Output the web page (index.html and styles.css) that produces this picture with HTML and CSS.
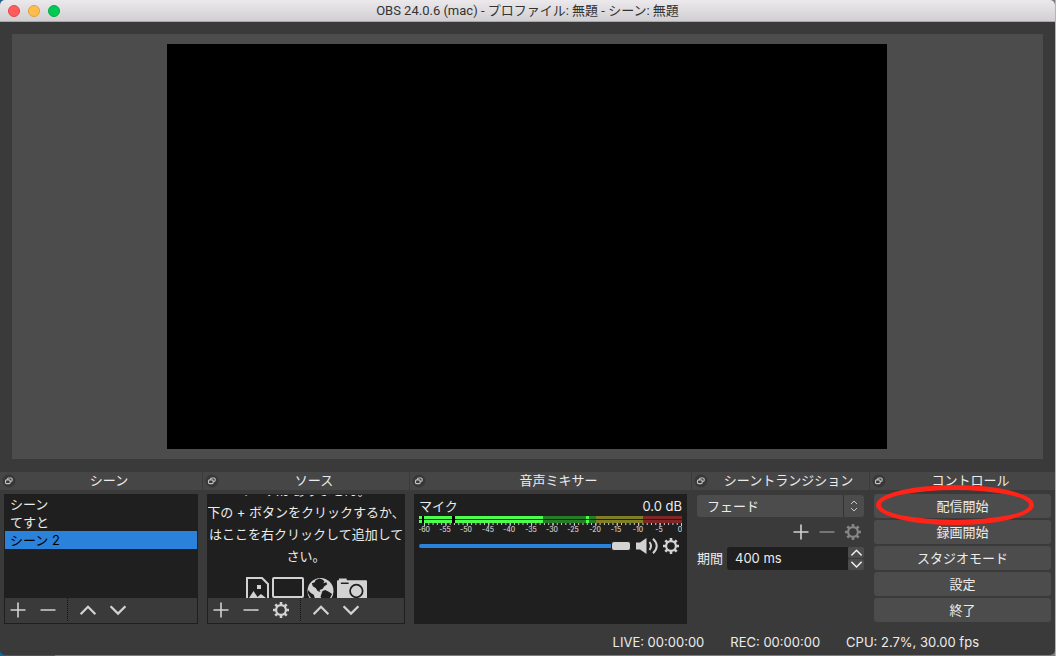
FILE: index.html
```
<!DOCTYPE html>
<html lang="ja">
<head>
<meta charset="UTF-8">
<meta name="viewport" content="width=device-width, initial-scale=1.0">
<title>OBS 24.0.6 (mac) - プロファイル: 無題 - シーン: 無題</title>
<link rel="stylesheet" href="styles.css">
</head>
<body>
  <svg class="defs" aria-hidden="true">
    <symbol id="i-float" viewBox="0 0 12 12">
      <circle cx="6" cy="6" r="5.5" fill="#383838"/>
      <g fill="none" stroke="#c4c4c4"><rect x="4.7" y="3.4" width="4" height="3" rx="1"/><rect x="3" y="5" width="4" height="3.2" rx="1" fill="#383838"/></g>
    </symbol>
    <symbol id="i-plus" viewBox="0 0 16 16"><path d="M8 0.5v15M0.5 8h15" stroke="currentColor" stroke-width="1.6" fill="none"/></symbol>
    <symbol id="i-minus" viewBox="0 0 16 16"><path d="M0.5 8h15" stroke="currentColor" stroke-width="1.6" fill="none"/></symbol>
    <symbol id="i-up" viewBox="0 0 16 16"><path d="M0.6 12.2L8 4.8l7.4 7.4" stroke="currentColor" stroke-width="2.2" fill="none"/></symbol>
    <symbol id="i-down" viewBox="0 0 16 16"><path d="M0.6 4.2L8 11.6l7.4-7.4" stroke="currentColor" stroke-width="2.2" fill="none"/></symbol>
    <symbol id="i-gear" viewBox="0 0 16 16">
      <circle cx="8" cy="8" r="4.9" fill="none" stroke="currentColor" stroke-width="2.2"/>
      <path d="M8 0v3M8 13v3M0 8h3M13 8h3M2.3 2.3l2.2 2.2M11.5 11.5l2.2 2.2M2.3 13.7l2.2-2.2M11.5 4.5l2.2-2.2" stroke="currentColor" stroke-width="2.6"/>
    </symbol>
  </svg>

  <div class="window">
    <header class="titlebar">
      <div class="lights">
        <button class="light close" aria-label="閉じる"></button>
        <button class="light minimize" aria-label="しまう"></button>
        <button class="light zoom" aria-label="拡大"></button>
      </div>
      <h1>OBS 24.0.6 (mac) - プロファイル: 無題 - シーン: 無題</h1>
    </header>

    <main class="preview">
      <div class="canvas"></div>
    </main>

    <div class="docks">
      <section class="dock">
        <header class="dock-title"><svg><use href="#i-float"/></svg><h2>シーン</h2></header>
        <div class="dock-body">
          <div class="panel">
            <ul class="scene-list">
              <li>シーン</li>
              <li>てすと</li>
              <li class="selected">シーン 2</li>
            </ul>
            <div class="toolbar">
              <button aria-label="追加"><svg><use href="#i-plus"/></svg></button>
              <button aria-label="削除"><svg><use href="#i-minus"/></svg></button>
              <span class="divider"></span>
              <button aria-label="上へ"><svg><use href="#i-up"/></svg></button>
              <button aria-label="下へ"><svg><use href="#i-down"/></svg></button>
            </div>
          </div>
        </div>
      </section>

      <section class="dock">
        <header class="dock-title"><svg><use href="#i-float"/></svg><h2>ソース</h2></header>
        <div class="dock-body">
          <div class="panel">
            <div class="sources-empty">
              <p>ソースがありません。<br>下の + ボタンをクリックするか、<br>またはここを右クリックして追加してくだ<br>さい。</p>
              <div class="source-icons">
                <svg class="image" viewBox="0 0 23 28"><path d="M1 1h15l6 6v20H1z" fill="none" stroke="#d2d2d2" stroke-width="2"/><path d="M11 8h4v4h-4zM3 21l4.500-7 4 6 3.500-3 5 4v4H3z" fill="#d2d2d2"/></svg>
                <svg class="display" viewBox="0 0 32 28"><rect x="1" y="1" width="30" height="19" rx="1" fill="none" stroke="#d2d2d2" stroke-width="2"/><path d="M12 21h8v5h-8z" fill="#d2d2d2"/></svg>
                <svg class="globe" viewBox="0 0 28 28"><circle cx="14" cy="14" r="13.500" fill="#d2d2d2"/><path d="M9 2.500l4-1.500 3 1 2 2-1 2 3-1 1 2-3 2-2 3-3 1 1 2-3-1-2-3-3-2-1-3 3-1zM16 14l3-1 4 2 3 2-2 4-3 2-1 4-3 1-1-5-2-3zM1 13l3 3 3 2 1 3-2 2-3-3-2-4z" fill="#1f1f1f"/></svg>
                <svg class="camera" viewBox="0 0 31 28"><path d="M0 4q0-1 1-1h1V1h8v2h20q1 0 1 1v20H0z" fill="#d2d2d2"/><path d="M4 6h8" stroke="#1f1f1f" stroke-width="1.500"/><circle cx="20" cy="14" r="6.500" fill="none" stroke="#1f1f1f" stroke-width="1.800"/></svg>
              </div>
            </div>
            <div class="toolbar">
              <button aria-label="追加"><svg><use href="#i-plus"/></svg></button>
              <button aria-label="削除"><svg><use href="#i-minus"/></svg></button>
              <button aria-label="設定"><svg><use href="#i-gear"/></svg></button>
              <span class="divider"></span>
              <button aria-label="上へ"><svg><use href="#i-up"/></svg></button>
              <button aria-label="下へ"><svg><use href="#i-down"/></svg></button>
            </div>
          </div>
        </div>
      </section>

      <section class="dock">
        <header class="dock-title"><svg><use href="#i-float"/></svg><h2>音声ミキサー</h2></header>
        <div class="dock-body">
          <div class="panel mixer">
            <div class="channel"><label for="volume">マイク</label><span>0.0 dB</span></div>
            <svg class="meter" viewBox="0 0 263 18">
              <path d="M0 0h177v3H0zM0 4h177v3H0z" fill="#267f26"/>
              <path d="M177 0h47v3h-47zM177 4h47v3h-47z" fill="#7f7f26"/>
              <path d="M224 0h39v3h-39zM224 4h39v3h-39z" fill="#7f2626"/>
              <path d="M0 0h124v3H0zM0 4h124v3H0zM167 0h3v3h-3zM167 4h3v3h-3z" fill="#4cff4c"/>
              <path d="M3 0h2v7H3zM33 0h3v7h-3z" fill="#000"/>
              <path d="M5 8H263" stroke="#ccc" stroke-width="2" stroke-dasharray="1 3.283"/>
              <path d="M5 8.500H263" stroke="#ccc" stroke-width="3" stroke-dasharray="1 20.417"/>
              <g class="scale">
                <text x="5" y="16">-60</text><text x="26" y="16">-55</text><text x="47" y="16">-50</text><text x="69" y="16">-45</text><text x="90" y="16">-40</text><text x="112" y="16">-35</text><text x="133" y="16">-30</text><text x="154" y="16">-25</text><text x="176" y="16">-20</text><text x="197" y="16">-15</text><text x="219" y="16">-10</text><text x="240" y="16">-5</text><text x="261" y="16">0</text>
              </g>
            </svg>
            <div class="volume-row">
              <input type="range" id="volume" min="0" max="100" value="100">
              <button aria-label="ミュート"><svg class="speaker" viewBox="0 0 22 16"><path d="M0 4.500h4L10.500 0v16L4 11.500H0z" fill="currentColor"/><path d="M13.500 4q3 4 0 8M17 .8q7.500 7.200 0 14.400" fill="none" stroke="currentColor" stroke-width="2"/></svg></button>
              <button aria-label="音声設定"><svg><use href="#i-gear"/></svg></button>
            </div>
          </div>
        </div>
      </section>

      <section class="dock">
        <header class="dock-title"><svg><use href="#i-float"/></svg><h2>シーントランジション</h2></header>
        <div class="dock-body transitions">
          <div class="select-wrap">
            <select aria-label="トランジション"><option>フェード</option></select>
            <svg viewBox="0 0 8 12"><path d="M1 4l3-3 3 3M1 8l3 3 3-3" fill="none" stroke="#c8c8c8"/></svg>
          </div>
          <div class="transition-tools">
            <button aria-label="追加"><svg><use href="#i-plus"/></svg></button>
            <button aria-label="削除" disabled><svg><use href="#i-minus"/></svg></button>
            <button aria-label="プロパティ" disabled><svg><use href="#i-gear"/></svg></button>
          </div>
          <div class="duration">
            <label for="duration">期間</label>
            <input type="text" id="duration" value="400 ms">
            <div class="spin">
              <button aria-label="増やす"><svg><use href="#i-up"/></svg></button>
              <button aria-label="減らす"><svg><use href="#i-down"/></svg></button>
            </div>
          </div>
        </div>
      </section>

      <section class="dock">
        <header class="dock-title"><svg><use href="#i-float"/></svg><h2>コントロール</h2></header>
        <div class="dock-body controls">
          <button>配信開始</button>
          <button>録画開始</button>
          <button>スタジオモード</button>
          <button>設定</button>
          <button>終了</button>
          <span class="marker"></span>
        </div>
      </section>
    </div>

    <footer class="statusbar">
      <span>LIVE: 00:00:00</span>
      <span>REC: 00:00:00</span>
      <span>CPU: 2.7%, 30.00 fps</span>
    </footer>
  </div>
</body>
</html>
```
FILE: styles.css
```
* { box-sizing: border-box; }
body { margin: 0; height: 100vh; padding: 0 1px 1px 0; background: linear-gradient(to right, #17678f 55px, #7c7c7c 55px, #7c7c7c calc(100% - 1px), #b4b4b4 calc(100% - 1px)); color: #ececec; font: 13px/18px Inter, "Noto Sans CJK JP", sans-serif; overflow: hidden; }
h1, h2, p, ul { margin: 0; padding: 0; font-size: 13px; font-weight: 400; }
ul { list-style: none; }
button { margin: 0; padding: 0; border: 0; background: none; color: inherit; font: inherit; display: flex; align-items: center; justify-content: center; }
input, select { font: inherit; color: inherit; margin: 0; border: 0; min-width: 0; }
svg { display: block; width: 16px; height: 16px; flex: none; }
.defs { display: none; }

.window { height: 100%; display: flex; flex-direction: column; background: #3a3a3a; border-radius: 5px; overflow: hidden; }
.titlebar { display: grid; grid-template-columns: 60px 1fr 60px; align-items: center; height: 22px; background: linear-gradient(#ebe9eb, #d1cfd1); border-bottom: 1px solid #aaa8aa; color: #333; }
.titlebar h1 { text-align: center; font-family: Roboto, "Noto Sans CJK JP", sans-serif; }
.lights { display: flex; gap: 8px; padding-left: 8px; }
.light { width: 12px; height: 12px; border-radius: 50%; }
.close { background: #ff5c5c; border: 1px solid #e14848; }
.minimize { background: #ffbd4c; border: 1px solid #dfa03c; }
.zoom { background: #00ca56; border: 1px solid #00ad44; }

.preview { flex: 1; min-height: 0; margin: 12px 12px 13px; padding: 10px 11px 10px 10px; background: #4c4c4c; display: flex; justify-content: center; }
.canvas { height: 100%; aspect-ratio: 16 / 9; background: #000; }

.docks { display: grid; grid-template-columns: 202fr 206fr 281fr 177fr 185fr; gap: 1px; }
.dock { min-width: 0; display: flex; flex-direction: column; }
.dock-title { display: flex; align-items: center; height: 18px; padding-left: 2px; background: #464646; }
.dock-title svg { width: 14px; height: 14px; }
.dock-title h2 { flex: 1; padding-bottom: 2px; line-height: 16px; text-align: center; white-space: nowrap; }
.dock-body { flex: 1; padding: 4px; display: flex; flex-direction: column; }
.panel { height: 130px; display: flex; flex-direction: column; background: #1f1f1f; border: 1px solid #1f1f1f; }
.scene-list { flex: 1; }
.scene-list li { padding: 0 5px; }
.scene-list .selected { background: #2a82da; color: #000; }
.toolbar { display: flex; align-items: center; gap: 14px; height: 25px; padding: 0 5px 2px; background: #3a3a3a; color: #d2d2d2; }
.divider { width: 1px; height: 23px; margin: 0 -2px 0 -3px; border-left: 1px dotted #111; }

.sources-empty { flex: 1; min-height: 0; display: flex; flex-direction: column; align-items: center; justify-content: center; overflow: hidden; }
.sources-empty p { flex: none; padding-bottom: 4px; line-height: 22px; text-align: center; white-space: nowrap; }
.source-icons { flex: none; display: flex; gap: 3px; height: 44px; padding-top: 6px; }
.source-icons svg { height: 28px; }
.source-icons .image { width: 23px; }
.source-icons .display { width: 32px; }
.source-icons .globe { width: 27px; }
.source-icons .camera { width: 30px; }

.mixer { padding: 3px 4px; }
.channel { display: flex; justify-content: space-between; padding-bottom: 2px; line-height: 16px; }
.meter { width: 100%; height: auto; }
.scale { font-size: 7px; fill: #e4e4e4; text-anchor: middle; }
.volume-row { display: flex; align-items: center; gap: 5px; height: 24px; padding-right: 3px; color: #d2d2d2; }
.volume-row .speaker { width: 22px; }
input[type=range] { flex: 1; height: 10px; background: none; appearance: none; -webkit-appearance: none; }
input[type=range]::-webkit-slider-runnable-track { height: 4px; border-radius: 2px; background: #2a82da; }
input[type=range]::-webkit-slider-thumb { -webkit-appearance: none; width: 20px; height: 10px; margin-top: -3px; border: 1px solid #1f1f1f; border-radius: 3px; background: #d2d2d2; }

.transitions { padding: 5px; gap: 4px; }
.select-wrap { display: grid; grid-template-columns: 1fr 20px; align-items: center; justify-items: center; height: 22px; border-radius: 3px; background: linear-gradient(to left, #4c4c4c 20px, #333 20px, #333 21px, #4c4c4c 21px); }
.select-wrap select { grid-area: 1 / 1 / 2 / 3; width: 100%; height: 22px; padding: 0 10px; appearance: none; background: none; }
.select-wrap svg { grid-area: 1 / 2; width: 8px; height: 12px; pointer-events: none; }
.transition-tools { display: flex; justify-content: flex-end; gap: 10px; height: 22px; padding-right: 3px; color: #d2d2d2; }
.transition-tools button:disabled { color: #858585; }
.duration { display: flex; align-items: center; height: 23px; }
.duration label { padding-bottom: 2px; }
.duration input { flex: 1; height: 23px; margin-left: 4px; padding: 0 8px 2px; background: #1f1f1f; border-radius: 3px 0 0 3px; }
.spin { display: flex; flex-direction: column; gap: 1px; width: 16px; height: 23px; }
.spin button { flex: 1; background: #4c4c4c; border-radius: 2px; }
.spin svg { width: 11px; height: 11px; }

.controls { gap: 2px; position: relative; }
.controls button { height: 24px; border-radius: 3px; background: #4c4c4c; }
.marker { position: absolute; top: -5px; left: 6px; width: 158px; height: 40px; border: 5px solid #ff2318; border-radius: 50%; pointer-events: none; }

.statusbar { display: flex; justify-content: flex-end; align-items: center; gap: 26px; height: 27px; padding-right: 76px; }
```
